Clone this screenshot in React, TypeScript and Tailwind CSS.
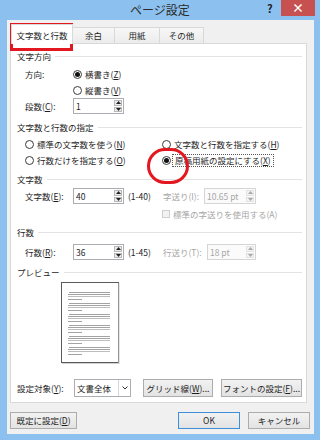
import type { ReactNode } from "react"

const U = ({ children }: { children: ReactNode }) => (
  <span className="underline underline-offset-[1px]">{children}</span>
)

function Radio({ checked }: { checked?: boolean }) {
  return (
    <span className="flex h-[9px] w-[9px] shrink-0 items-center justify-center rounded-full border border-[#3c3c3c] bg-white">
      {checked && <span className="h-[5px] w-[5px] rounded-full bg-[#111]" />}
    </span>
  )
}

function Heading({ label }: { label: string }) {
  return (
    <div className="flex h-[14px] items-center gap-[4px] pl-[6px] pr-[4px]">
      <span>{label}</span>
      <span className="h-px flex-1 bg-[#e3e3e3]" />
    </div>
  )
}

function Arrow({ up, dim }: { up?: boolean; dim?: boolean }) {
  return (
    <svg width="5" height="3" viewBox="0 0 5 3" fill={dim ? "#a8a8a8" : "#222"}>
      {up ? <path d="M2.5 0L5 3H0z" /> : <path d="M0 0h5L2.5 3z" />}
    </svg>
  )
}

function Spin({ value, disabled, w }: { value: string; disabled?: boolean; w: string }) {
  return (
    <div
      className={`flex h-[16px] ${w} border ${
        disabled ? "border-[#d5d5d5] bg-[#fbfbfb] text-[#a6a6a6]" : "border-[#abadb3] bg-white"
      }`}
    >
      <span className="flex flex-1 items-center pl-[2px]">{value}</span>
      <div className="flex w-[10px] flex-col gap-px p-px">
        <span
          className={`flex flex-1 items-center justify-center border ${
            disabled ? "border-[#e2e2e2] bg-[#f4f4f4]" : "border-[#b8b8b8] bg-[#ececec]"
          }`}
        >
          <Arrow up dim={disabled} />
        </span>
        <span
          className={`flex flex-1 items-center justify-center border ${
            disabled ? "border-[#e2e2e2] bg-[#f4f4f4]" : "border-[#b8b8b8] bg-[#ececec]"
          }`}
        >
          <Arrow dim={disabled} />
        </span>
      </div>
    </div>
  )
}

function Btn({ children, w, def }: { children: ReactNode; w: string; def?: boolean }) {
  return (
    <div
      className={`flex h-full ${w} items-center justify-center border bg-gradient-to-b from-[#f2f2f2] to-[#e3e3e3] ${
        def ? "border-[#3c8fd8]" : "border-[#acacac]"
      }`}
    >
      {children}
    </div>
  )
}

function Preview() {
  const groups = [0, 1, 2, 3, 4, 5]
  return (
    <svg width="60" height="83" viewBox="0 0 60 83" className="ml-[49px] mt-[3px]">
      <rect x="1.5" y="0.5" width="57" height="80" fill="#fff" stroke="#5a5a5a" />
      <path d="M2 81.5h57M59 1v81" stroke="#d0d0d0" />
      {groups.map((g) => {
        const y = 10.5 + g * 11
        return (
          <g key={g} stroke="#a3a3a3">
            <path d={`M9 ${y}h41`} />
            <path d={`M8 ${y + 2}h42`} />
            <path d={`M8 ${y + 4}h42`} stroke="#bdbdbd" />
            <path d={`M8 ${y + 7}h14`} />
          </g>
        )
      })}
    </svg>
  )
}

export default function App() {
  return (
    <div className="relative h-[440px] w-[320px] overflow-hidden bg-[#8cc1ef] font-['Noto_Sans_CJK_JP',sans-serif] text-[8.5px] leading-none text-[#1e1e1e]">
      {/* title bar */}
      <div className="relative flex h-[20px] items-center justify-center">
        <span className="text-[12px] text-[#2a2a2a]">ページ設定</span>
        <span className="absolute left-[267px] top-[3px] text-[11px] font-bold text-[#222]">?</span>
        <span className="absolute left-[281px] top-0 flex h-[16px] w-[34px] items-center justify-center bg-[#c75050] text-[12px] font-bold text-white">
          ×
        </span>
      </div>

      {/* body */}
      <div className="ml-[7px] flex h-[414px] w-[307px] flex-col bg-[#f0f0f0] px-[3px] pt-[5px]">
        {/* tabs */}
        <div className="flex h-[18px] items-end">
          <div className="relative z-10 -mb-px ml-[1px] flex h-[20px] w-[62px] items-center justify-center border border-b-0 border-[#d9d9d9] bg-white pt-[1px]">
            文字数と行数
          </div>
          <div className="flex h-[16px] w-[42px] items-center justify-center border border-b-0 border-l-0 border-[#d9d9d9] bg-gradient-to-b from-[#f7f7f7] to-[#ececec]">
            余白
          </div>
          <div className="flex h-[16px] w-[45px] items-center justify-center border border-b-0 border-l-0 border-[#d9d9d9] bg-gradient-to-b from-[#f7f7f7] to-[#ececec]">
            用紙
          </div>
          <div className="flex h-[16px] w-[44px] items-center justify-center border border-b-0 border-l-0 border-[#d9d9d9] bg-gradient-to-b from-[#f7f7f7] to-[#ececec]">
            その他
          </div>
        </div>

        {/* panel */}
        <div className="flex h-[360px] w-[297px] flex-col border border-[#d9d9d9] bg-white pt-[5px]">
          <Heading label="文字方向" />
          <div className="mt-[4px] flex h-[14px] items-center pl-[14px]">
            <span className="w-[48px]">方向:</span>
            <Radio checked />
            <span className="ml-[3px]">
              横書き(<U>Z</U>)
            </span>
          </div>
          <div className="mt-[2px] flex h-[14px] items-center pl-[62px]">
            <Radio />
            <span className="ml-[3px]">
              縦書き(<U>V</U>)
            </span>
          </div>
          <div className="mt-[1px] flex h-[16px] items-center pl-[14px]">
            <span className="w-[48px]">
              段数(<U>C</U>):
            </span>
            <Spin value="1" w="w-[51px]" />
          </div>

          <div className="mt-[6px]">
            <Heading label="文字数と行数の指定" />
          </div>
          <div className="mt-[3px] flex h-[14px] items-center pl-[14px]">
            <div className="flex w-[137px] items-center">
              <Radio />
              <span className="ml-[3px]">
                標準の文字数を使う(<U>N</U>)
              </span>
            </div>
            <Radio />
            <span className="ml-[3px]">
              文字数と行数を指定する(<U>H</U>)
            </span>
          </div>
          <div className="mt-[2px] flex h-[14px] items-center pl-[14px]">
            <div className="flex w-[137px] items-center">
              <Radio />
              <span className="ml-[3px]">
                行数だけを指定する(<U>O</U>)
              </span>
            </div>
            <Radio checked />
            <span className="ml-[1px] flex h-[13px] items-center border border-dotted border-[#555] px-[2px]">
              原稿用紙の設定にする(<U>X</U>)
            </span>
          </div>

          <div className="mt-[5px]">
            <Heading label="文字数" />
          </div>
          <div className="mt-[2px] flex h-[16px] items-center pl-[14px]">
            <span className="w-[48px]">
              文字数(<U>E</U>):
            </span>
            <Spin value="40" w="w-[51px]" />
            <span className="ml-[4px] w-[35px]">(1-40)</span>
            <span className="w-[41px] text-[#a6a6a6]">字送り(I):</span>
            <Spin value="10.65 pt" disabled w="w-[52px]" />
          </div>
          <div className="mt-[3px] flex h-[14px] items-center pl-[151px]">
            <span className="h-[8px] w-[8px] border border-[#cfcfcf] bg-[#f2f2f2]" />
            <span className="ml-[3px] text-[#a6a6a6]">標準の字送りを使用する(A)</span>
          </div>

          <div className="mt-[4px]">
            <Heading label="行数" />
          </div>
          <div className="mt-[5px] flex h-[16px] items-center pl-[14px]">
            <span className="w-[48px]">
              行数(<U>R</U>):
            </span>
            <Spin value="36" w="w-[51px]" />
            <span className="ml-[4px] w-[35px]">(1-45)</span>
            <span className="w-[44px] text-[#a6a6a6]">行送り(T):</span>
            <Spin value="18 pt" disabled w="w-[49px]" />
          </div>

          <div className="mt-[5px]">
            <Heading label="プレビュー" />
          </div>
          <Preview />

          <div className="mt-[14px] flex h-[18px] items-center pl-[6px]">
            <span className="w-[57px]">
              設定対象(<U>Y</U>):
            </span>
            <div className="flex h-full w-[57px] border border-[#abadb3] bg-white">
              <span className="flex flex-1 items-center pl-[2px]">文書全体</span>
              <span className="flex w-[12px] items-center justify-center border-l border-[#d5d5d5]">
                <svg width="6" height="4" viewBox="0 0 6 4" fill="none" stroke="#333">
                  <path d="M0.5 0.5L3 3l2.5-2.5" />
                </svg>
              </span>
            </div>
            <div className="ml-[12px] h-full">
              <Btn w="w-[70px]">
                グリッド線(<U>W</U>)...
              </Btn>
            </div>
            <div className="ml-[8px] h-full">
              <Btn w="w-[81px]">
                フォントの設定(<U>F</U>)...
              </Btn>
            </div>
          </div>
        </div>

        {/* dialog buttons */}
        <div className="mt-[9px] flex h-[17px]">
          <Btn w="w-[67px]">
            既定に設定(<U>D</U>)
          </Btn>
          <div className="flex-1" />
          <Btn w="w-[62px]" def>
            OK
          </Btn>
          <div className="ml-[8px] mr-[1px] h-full">
            <Btn w="w-[62px]">キャンセル</Btn>
          </div>
        </div>
      </div>

      {/* red annotations */}
      <div className="absolute left-[10px] top-[23px] h-[28px] w-[63px] border-[3px] border-[#e3171f]" />
      <div className="absolute left-[147px] top-[148px] h-[36px] w-[42px] rounded-full border-[3px] border-[#e3171f]" />
    </div>
  )
}
